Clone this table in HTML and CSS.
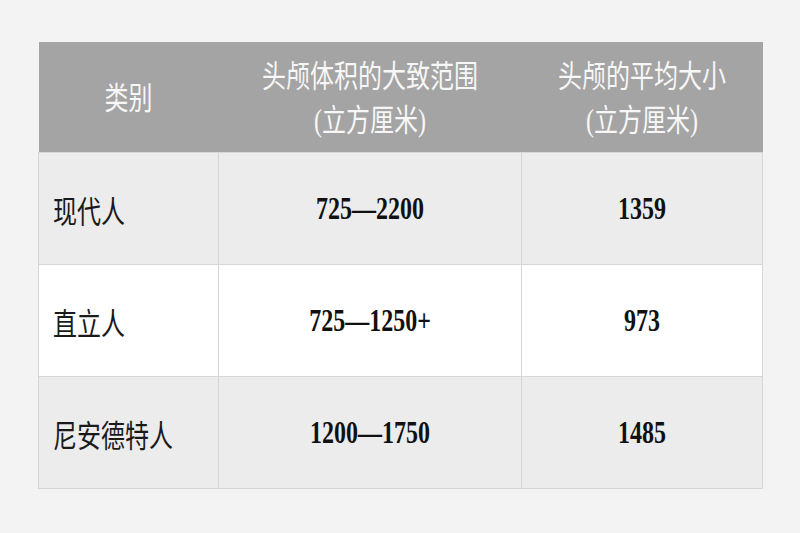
FILE: index.html
```html
<!DOCTYPE html>
<html lang="zh">
<head>
<meta charset="utf-8">
<link rel="stylesheet" href="styles.css">
</head>
<body>
<div class="page">
  <table class="data">
    <colgroup>
      <col class="c1"><col class="c2"><col class="c3">
    </colgroup>
    <thead>
      <tr>
        <th><span class="t">类别</span></th>
        <th><span class="t">头颅体积的大致范围</span><br><span class="t">(立方厘米)</span></th>
        <th><span class="t">头颅的平均大小</span><br><span class="t">(立方厘米)</span></th>
      </tr>
    </thead>
    <tbody>
      <tr class="alt">
        <td class="name"><span class="t">现代人</span></td>
        <td class="num"><span class="t">725—2200</span></td>
        <td class="num"><span class="t">1359</span></td>
      </tr>
      <tr>
        <td class="name"><span class="t">直立人</span></td>
        <td class="num"><span class="t">725—1250+</span></td>
        <td class="num"><span class="t">973</span></td>
      </tr>
      <tr class="alt">
        <td class="name"><span class="t">尼安德特人</span></td>
        <td class="num"><span class="t">1200—1750</span></td>
        <td class="num"><span class="t">1485</span></td>
      </tr>
    </tbody>
  </table>
</div>
</body>
</html>
```
FILE: styles.css
```css
html, body {
  margin: 0;
  padding: 0;
  background: #f3f3f3;
}
.page {
  width: 800px;
  height: 533px;
  padding: 42px 38px 0 38px;
  box-sizing: border-box;
}
.data {
  border-collapse: collapse;
  table-layout: fixed;
  width: 724px;
  font-family: "Liberation Serif", "Noto Sans CJK SC", serif;
  font-size: 24px;
}
.c1 { width: 180px; }
.c2 { width: 303px; }
.c3 { width: 241px; }
.t {
  display: inline-block;
  transform: scaleY(1.28);
}
.data th {
  background: #a4a4a4;
  color: #f7f7f7;
  font-weight: normal;
  height: 106px;
  line-height: 44px;
  padding: 4px 0 0 0;
  text-align: center;
  vertical-align: middle;
  border-bottom: 1px solid #d8d8d8;
}
.data td {
  height: 109px;
  padding: 2px 0 0 0;
  border: 1px solid #d6d6d6;
  background: #ffffff;
  color: #111111;
  vertical-align: middle;
}
.data tr.alt td {
  background: #ececec;
}
.data td.name {
  padding-left: 14px;
  text-align: left;
  font-weight: normal;
  color: #1a1a1a;
}
.data td.num {
  text-align: center;
  font-weight: bold;
}
```
